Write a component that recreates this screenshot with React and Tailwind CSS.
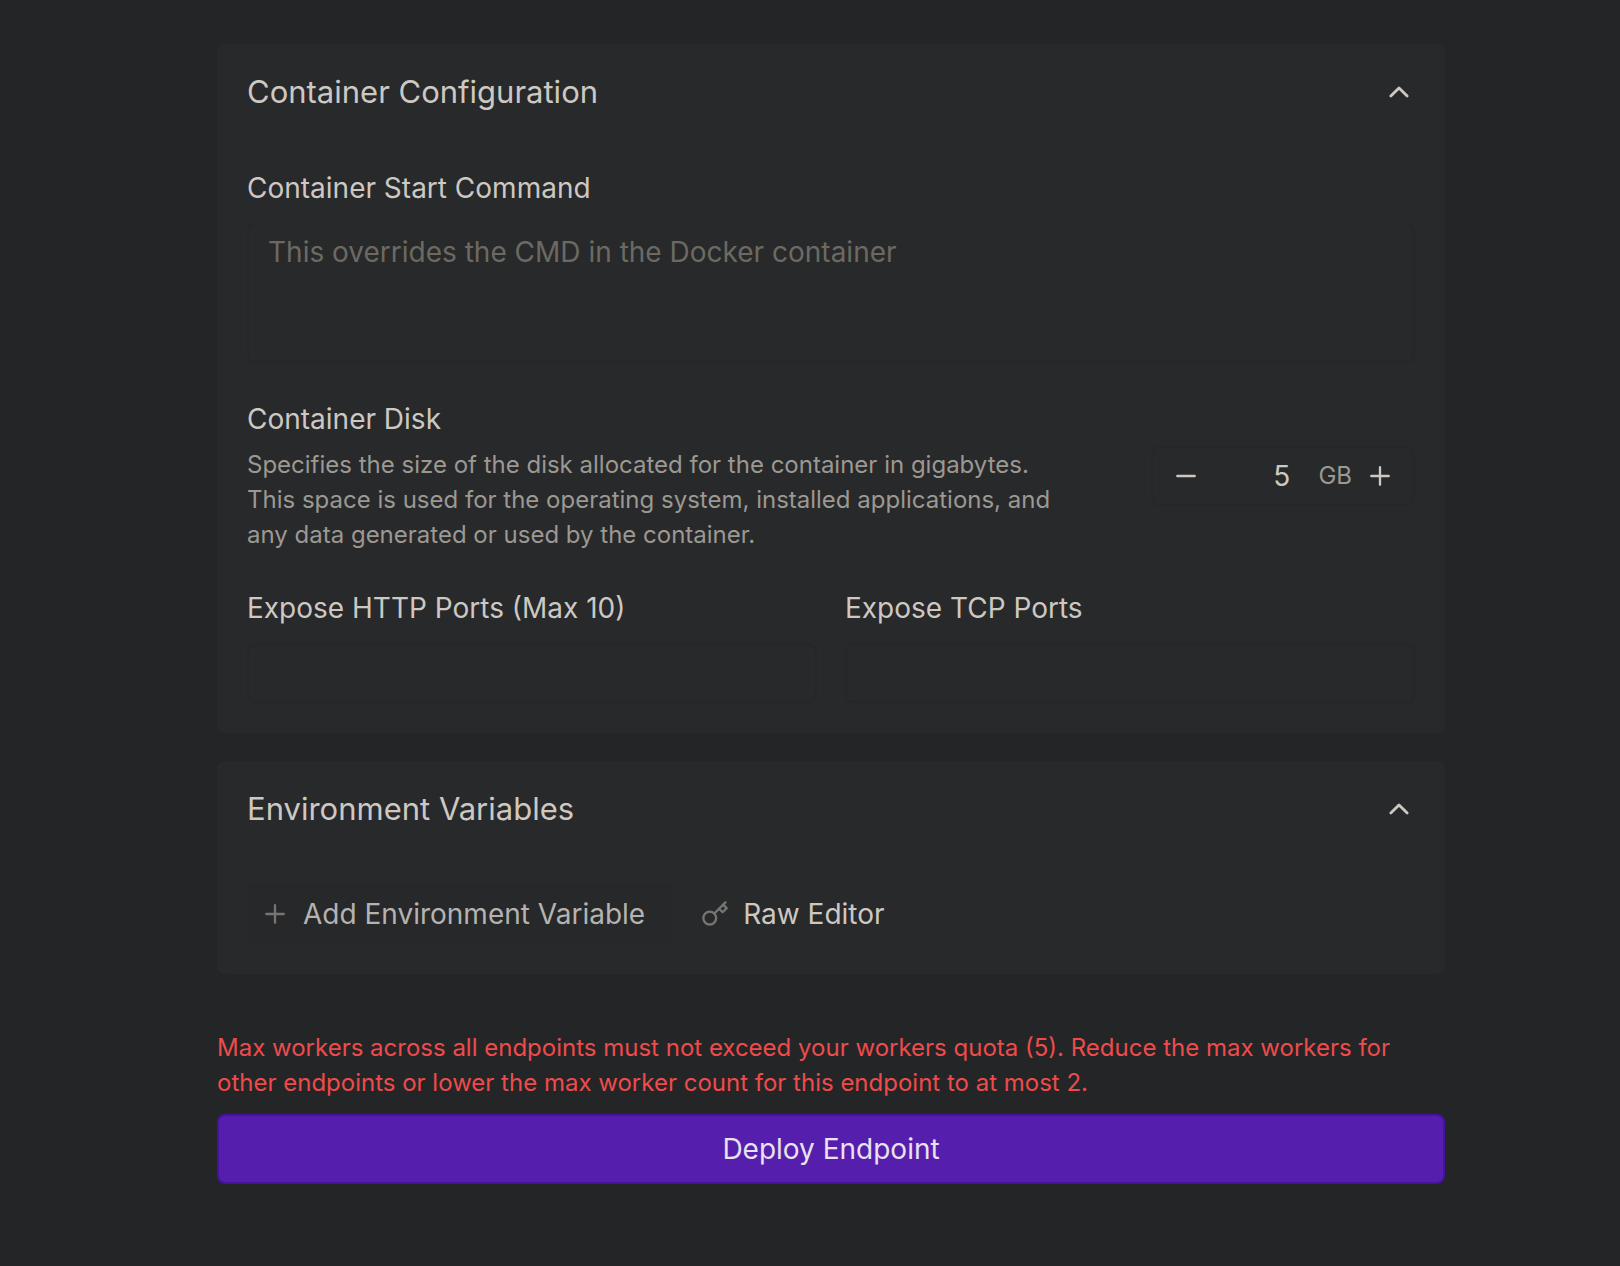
import React, { useState } from 'react';

const inputClass =
    'block w-full rounded-lg border-2 border-[#262729] bg-[#28292a] px-[19px] text-[28px] leading-10 text-[#cdc8c1] outline-none placeholder:text-[#6c6963] placeholder:opacity-100';

const PLUS = 'M12 4.5v15m7.5-7.5h-15';

function Stroke({ d, className, width = 2 }) {
    return (
        <svg viewBox="0 0 24 24" fill="none" stroke="currentColor" strokeWidth={width} strokeLinecap="round" strokeLinejoin="round" className={className} aria-hidden="true">
            <path d={d} />
        </svg>
    );
}

function KeyIcon() {
    return (
        <svg viewBox="0 0 24 24" fill="none" stroke="currentColor" strokeWidth="2" strokeLinecap="round" strokeLinejoin="round" className="size-7 text-[#777572]" aria-hidden="true">
            <circle cx="7.5" cy="15.5" r="5.5" />
            <path d="m21 2-9.6 9.6" />
            <path d="m15.5 7.5 3 3L22 7l-3-3" />
        </svg>
    );
}

function Section({ title, children }) {
    const [open, setOpen] = useState(true);

    return (
        <section className="rounded-lg bg-[#28292b] px-[30px] pb-[30px]">
            <h2>
                <button
                    type="button"
                    aria-expanded={open}
                    onClick={() => setOpen(!open)}
                    className="flex w-full items-center justify-between pt-7 pr-0.5 text-left text-[31px] leading-10"
                >
                    {title}
                    <Stroke d="m5 15.5 7-7 7 7" width={2.4} className={open ? 'size-7' : 'size-7 rotate-180'} />
                </button>
            </h2>
            {open && children}
        </section>
    );
}

export default function App() {
    const [disk, setDisk] = useState(5);

    return (
        <div className="min-h-screen bg-[#242527] px-4 pt-11 pb-20 font-['Inter',sans-serif] text-[#cdc8c1] lg:pr-[175px] lg:pl-[217px]">
            <form className="flex flex-col" onSubmit={(e) => e.preventDefault()}>
                <div className="flex flex-col gap-7">
                    <Section title="Container Configuration">
                        <div className="flex flex-col pt-14">
                            <label htmlFor="start-command" className="text-[28px] leading-10">Container Start Command</label>
                            <textarea
                                id="start-command"
                                placeholder="This overrides the CMD in the Docker container"
                                className={`${inputClass} mt-[15px] h-[140px] resize-none pt-[7px]`}
                            />
                        </div>

                        {/* Disk size */}
                        <div className="mt-9 flex items-center justify-between">
                            <div className="max-w-[820px]">
                                <label htmlFor="disk" className="block text-[28px] leading-10">Container Disk</label>
                                <p className="mt-2 text-[24px] leading-[35px] text-[#9c9892]">
                                    Specifies the size of the disk allocated for the container in gigabytes. This space is used for the operating system, installed applications, and any data generated or used by the container.
                                </p>
                            </div>
                            <div className="flex h-[60px] w-[264px] items-center rounded-lg border-2 border-[#262729] px-[19px]">
                                <button type="button" aria-label="Decrease disk size" onClick={() => setDisk(Math.max(1, disk - 1))}>
                                    <Stroke d="M4.5 12h15" className="size-7" />
                                </button>
                                <input
                                    id="disk"
                                    inputMode="numeric"
                                    value={disk}
                                    onChange={(e) => setDisk(Number(e.target.value) || 0)}
                                    className="min-w-0 flex-1 bg-transparent text-right text-[28px] leading-10 outline-none"
                                />
                                <span className="pr-3.5 pl-7 text-[24px] text-[#9c9892]">GB</span>
                                <button type="button" aria-label="Increase disk size" onClick={() => setDisk(disk + 1)}>
                                    <Stroke d={PLUS} className="size-7" />
                                </button>
                            </div>
                        </div>

                        {/* Ports */}
                        <div className="mt-9 grid grid-cols-2 gap-7">
                            <div>
                                <label htmlFor="http-ports" className="block text-[28px] leading-10">Expose HTTP Ports (Max 10)</label>
                                <input id="http-ports" className={`${inputClass} mt-[15px] h-[60px]`} />
                            </div>
                            <div>
                                <label htmlFor="tcp-ports" className="block text-[28px] leading-10">Expose TCP Ports</label>
                                <input id="tcp-ports" className={`${inputClass} mt-[15px] h-[60px]`} />
                            </div>
                        </div>
                    </Section>

                    <Section title="Environment Variables">
                        <div className="flex gap-7 pt-[55px] text-[28px] leading-10">
                            <button type="button" className="flex h-[60px] items-center gap-3.5 rounded-lg border-2 border-[#27282a] bg-[#27282a] pr-[26px] pl-3 text-[#b5b3b0]">
                                <Stroke d={PLUS} className="size-7 text-[#777572]" />
                                Add Environment Variable
                            </button>
                            <button type="button" className="flex h-[60px] items-center gap-3.5">
                                <KeyIcon />
                                Raw Editor
                            </button>
                        </div>
                    </Section>
                </div>

                <p role="alert" className="mt-14 text-[24px] leading-[35px] text-[#ef4b4b]">
                    Max workers across all endpoints must not exceed your workers quota (5). Reduce the max workers for other endpoints or lower the max worker count for this endpoint to at most 2.
                </p>
                <button type="submit" className="mt-3.5 h-[70px] rounded-lg border-2 border-[#4512a3] bg-[#551eac] text-[28px] leading-10 text-[#e8e2ee]">
                    Deploy Endpoint
                </button>
            </form>
        </div>
    );
}
